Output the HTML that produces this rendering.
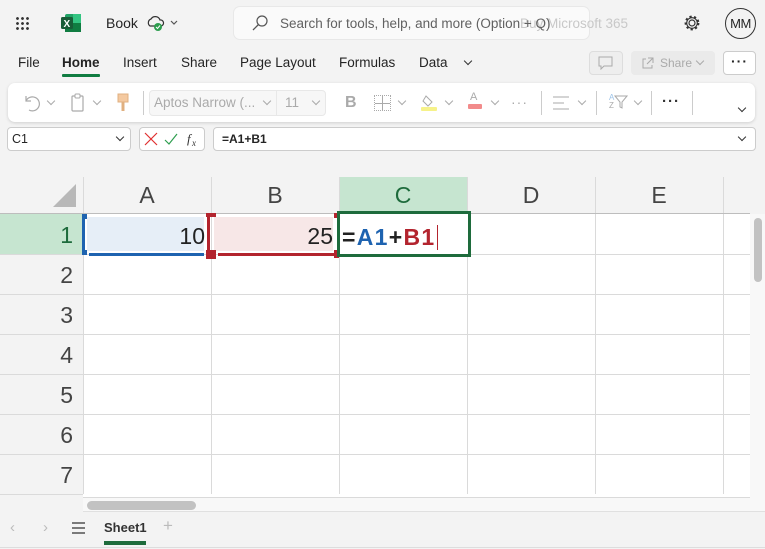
<!DOCTYPE html>
<html><head><style>
*{box-sizing:border-box;margin:0;padding:0}
body{width:765px;height:549px;overflow:hidden;background:#f3f3f3;font-family:"Liberation Sans",sans-serif;position:relative;color:#242424}
.a{position:absolute}
.t{font-size:13px;color:#242424}
.vl{position:absolute;top:177px;width:1px;background:#dadada}
.hl{position:absolute;left:0;height:1px;background:#dadada;width:750px}
.ch{position:absolute;top:177px;height:37px;font-size:23px;color:#444;text-align:center;line-height:37px;width:128px}
.rh{position:absolute;left:0;width:82px;height:40px;font-size:23px;color:#444;text-align:right;padding-right:9px;line-height:42px}
.chev{display:block;width:6px;height:6px;border-right:1.3px solid #555;border-bottom:1.3px solid #555;transform:rotate(45deg)}
</style></head><body>
<div class="a" style="left:15px;top:16px;width:14px;height:14px;background:radial-gradient(circle,#333 1.2px,transparent 1.6px) 0 0/5px 5px"></div>
<svg class="a" style="left:61px;top:14px" width="20" height="18"><rect x="4" y="0" width="16" height="18" rx="2" fill="#21a366"/><rect x="12" y="0" width="8" height="9" fill="#33c481"/><rect x="4" y="9" width="16" height="9" fill="#107c41"/><rect x="0" y="3" width="12" height="12" rx="1.5" fill="#185c37"/><text x="2.5" y="13" font-size="10" fill="#fff" font-family="Liberation Sans" font-weight="bold">X</text></svg>
<div class="a" style="left:106px;top:15px;font-size:14px">Book</div>
<svg class="a" style="left:146px;top:14px" width="34" height="18"><path d="M4 12a4 4 0 0 1 1-7a5 5 0 0 1 9 1a3 3 0 0 1 1 6z" fill="none" stroke="#333" stroke-width="1.2"/><circle cx="12" cy="13" r="4" fill="#2e9e4f"/><path d="M10 13l1.5 1.5 2.5-3" stroke="#fff" fill="none" stroke-width="1"/><path d="M25 7l3 3 3-3" stroke="#555" fill="none" stroke-width="1.2"/></svg>
<div class="a" style="left:234px;top:7px;width:355px;height:32px;background:#fafafa;border-radius:6px;box-shadow:0 0 0 1px #e8e8e8"></div>
<svg class="a" style="left:251px;top:14px" width="18" height="18"><circle cx="11" cy="7" r="5" fill="none" stroke="#555" stroke-width="1.2"/><path d="M7.5 10.5L2 16" stroke="#555" stroke-width="1.3"/></svg>
<div class="a" style="left:520px;top:16px;font-size:13.5px;color:#c8c8c8;white-space:nowrap">Buy Microsoft 365</div>
<div class="a" style="left:280px;top:16px;font-size:13.5px;color:#616161;white-space:nowrap">Search for tools, help, and more (Option + Q)</div>
<svg class="a" style="left:683px;top:14px" width="18" height="18"><circle cx="9" cy="9" r="3" fill="none" stroke="#333" stroke-width="1.2"/><circle cx="9" cy="9" r="6.3" fill="none" stroke="#333" stroke-width="2.2" stroke-dasharray="2.2 2.3"/><circle cx="9" cy="9" r="5.3" fill="none" stroke="#333" stroke-width="1.1"/></svg>
<div class="a" style="left:725px;top:8px;width:31px;height:31px;border:1.3px solid #333;border-radius:50%;font-size:13px;text-align:center;line-height:29px;letter-spacing:-0.5px">MM</div>
<div class="a t" style="left:18px;top:55px;font-size:13.5px">File</div>
<div class="a t" style="left:62px;top:55px;font-size:13.5px;font-weight:bold">Home</div>
<div class="a" style="left:62px;top:74px;width:38px;height:3px;background:#107c41;border-radius:1px"></div>
<div class="a t" style="left:123px;top:55px;font-size:13.5px">Insert</div>
<div class="a t" style="left:181px;top:55px;font-size:13.5px">Share</div>
<div class="a t" style="left:240px;top:55px;font-size:13.5px">Page Layout</div>
<div class="a t" style="left:339px;top:55px;font-size:13.5px">Formulas</div>
<div class="a t" style="left:419px;top:55px;font-size:13.5px">Data</div>
<div class="a" style="left:465px;top:58px"><span class="chev" style="border-color:#333"></span></div>
<div class="a" style="left:589px;top:51px;width:34px;height:24px;border:1px solid #ddd;border-radius:4px;background:#eee"></div>
<svg class="a" style="left:597px;top:56px" width="18" height="14"><path d="M2 1h13v9H7l-3 3v-3H2z" fill="none" stroke="#aaa"/></svg>
<div class="a" style="left:631px;top:51px;width:84px;height:24px;border-radius:4px;background:#eaeaea"></div>
<div class="a" style="left:660px;top:56px;font-size:12px;color:#aaa">Share</div>
<div class="a" style="left:697px;top:58px"><span class="chev" style="border-color:#aaa"></span></div>
<svg class="a" style="left:641px;top:56px" width="14" height="14"><path d="M7 2h5v5M12 2L6 8M5 3H2v9h9V9" fill="none" stroke="#aaa"/></svg>
<div class="a" style="left:723px;top:51px;width:33px;height:24px;border:1px solid #ccc;border-radius:4px;background:#fff;text-align:center;font-size:14px;line-height:18px;font-weight:bold;letter-spacing:1px">···</div>
<div class="a" style="left:8px;top:83px;width:747px;height:39px;background:#fff;border-radius:7px;box-shadow:0 1px 3px rgba(0,0,0,.15)"></div>
<svg class="a" style="left:22px;top:93px" width="20" height="20"><path d="M4 3v5h5M4 8a7 7 0 1 1 3 9" fill="none" stroke="#aaa" stroke-width="1.2"/></svg>
<div class="a" style="left:48px;top:98px"><span class="chev" style="border-color:#aaa"></span></div>
<svg class="a" style="left:70px;top:93px" width="16" height="20"><rect x="2" y="3" width="11" height="15" rx="1" fill="none" stroke="#aaa" stroke-width="1.2"/><rect x="5" y="1" width="5" height="4" rx="1" fill="#fff" stroke="#aaa"/></svg>
<div class="a" style="left:94px;top:98px"><span class="chev" style="border-color:#aaa"></span></div>
<svg class="a" style="left:117px;top:93px" width="12" height="20"><rect x="1" y="1" width="10" height="8" fill="#f4c9a0" stroke="#e0b080"/><path d="M6 9v9" stroke="#e0b080" stroke-width="3"/></svg>
<div class="a" style="left:143px;top:91px;width:1px;height:24px;background:#ccc"></div>
<div class="a" style="left:149px;top:90px;width:177px;height:26px;border:1px solid #e8e8e8;border-radius:4px;background:#f7f7f7"></div>
<div class="a" style="left:154px;top:95px;font-size:13.5px;color:#aaa">Aptos Narrow (...</div>
<div class="a" style="left:264px;top:98px"><span class="chev" style="border-color:#aaa"></span></div>
<div class="a" style="left:276px;top:90px;width:1px;height:26px;background:#e8e8e8"></div>
<div class="a" style="left:285px;top:95px;font-size:13.5px;color:#aaa">11</div>
<div class="a" style="left:313px;top:98px"><span class="chev" style="border-color:#aaa"></span></div>
<div class="a" style="left:345px;top:94px;font-size:16px;color:#aaa;font-weight:bold">B</div>
<div class="a" style="left:374px;top:95px;width:17px;height:16px;border:1px dotted #aaa;background:linear-gradient(#aaa,#aaa) 7px 0/1px 100% no-repeat,linear-gradient(#aaa,#aaa) 0 7px/100% 1px no-repeat"></div>
<div class="a" style="left:399px;top:98px"><span class="chev" style="border-color:#aaa"></span></div>
<svg class="a" style="left:420px;top:93px" width="18" height="18"><path d="M6 3l6 6-4 4-5-5z" fill="none" stroke="#aaa"/><rect x="1" y="14" width="16" height="4" rx="1" fill="#f6f28a"/></svg>
<div class="a" style="left:446px;top:98px"><span class="chev" style="border-color:#aaa"></span></div>
<div class="a" style="left:470px;top:91px;font-size:11px;color:#aaa">A</div>
<div class="a" style="left:468px;top:104px;width:14px;height:5px;background:#f28b8b;border-radius:1px"></div>
<div class="a" style="left:492px;top:98px"><span class="chev" style="border-color:#aaa"></span></div>
<div class="a" style="left:511px;top:94px;font-size:14px;color:#aaa;letter-spacing:1px">···</div>
<div class="a" style="left:541px;top:91px;width:1px;height:24px;background:#ccc"></div>
<svg class="a" style="left:553px;top:95px" width="18" height="16"><path d="M0 2h16M0 8h11M0 14h16" stroke="#aaa"/></svg>
<div class="a" style="left:579px;top:98px"><span class="chev" style="border-color:#aaa"></span></div>
<div class="a" style="left:596px;top:91px;width:1px;height:24px;background:#ccc"></div>
<div class="a" style="left:609px;top:94px;font-size:8px;line-height:8px;color:#9cc3e8">A<br><span style="color:#aaa">Z</span></div>
<svg class="a" style="left:614px;top:94px" width="14" height="16"><path d="M1 2h12l-5 6v6l-2-1V8z" fill="none" stroke="#aaa"/></svg>
<div class="a" style="left:635px;top:98px"><span class="chev" style="border-color:#aaa"></span></div>
<div class="a" style="left:651px;top:91px;width:1px;height:24px;background:#ccc"></div>
<div class="a" style="left:662px;top:93px;font-size:15px;font-weight:bold;color:#333;letter-spacing:1px">···</div>
<div class="a" style="left:692px;top:91px;width:1px;height:24px;background:#ccc"></div>
<div class="a" style="left:739px;top:105px"><span class="chev" style="border-color:#333"></span></div>
<div class="a" style="left:7px;top:127px;width:124px;height:24px;background:#fff;border:1px solid #ccc;border-radius:4px"></div>
<div class="a" style="left:12px;top:132px;font-size:12.5px">C1</div>
<div class="a" style="left:117px;top:134px"><span class="chev" style="border-color:#333"></span></div>
<div class="a" style="left:139px;top:127px;width:66px;height:24px;background:#fff;border:1px solid #ccc;border-radius:4px"></div>
<svg class="a" style="left:144px;top:132px" width="58" height="15"><path d="M1 1l12 12M13 1L1 13" stroke="#e03030" stroke-width="1.2"/><path d="M21 8l4 4 8-10" stroke="#2e9e4f" stroke-width="1.2" fill="none"/><text x="43" y="11" font-size="13" font-style="italic" font-family="Liberation Serif" fill="#333">f</text><text x="48" y="14" font-size="9" font-style="italic" font-family="Liberation Serif" fill="#333">x</text></svg>
<div class="a" style="left:213px;top:127px;width:543px;height:24px;background:#fff;border:1px solid #ccc;border-radius:4px"></div>
<div class="a" style="left:222px;top:132px;font-size:12px;font-weight:bold">=A1+B1</div>
<div class="a" style="left:739px;top:134px"><span class="chev" style="border-color:#333"></span></div>
<div class="a" style="left:83px;top:214px;width:667px;height:280px;background:#fff"></div>
<div class="a" style="left:339px;top:177px;width:128px;height:37px;background:#c6e5d0"></div>
<div class="a" style="left:0;top:214px;width:83px;height:40px;background:#c6e5d0"></div>
<svg class="a" style="left:52px;top:183px" width="26" height="26"><path d="M24 1V24H1z" fill="#b8b8b8"/></svg>
<div class="vl" style="left:83px;height:317px"></div>
<div class="vl" style="left:211px;height:317px"></div>
<div class="vl" style="left:339px;height:317px"></div>
<div class="vl" style="left:467px;height:317px"></div>
<div class="vl" style="left:595px;height:317px"></div>
<div class="vl" style="left:723px;height:317px"></div>
<div class="hl" style="top:213px;background:#bdbdbd"></div>
<div class="hl" style="top:254px"></div><div class="hl" style="top:294px"></div><div class="hl" style="top:334px"></div><div class="hl" style="top:374px"></div><div class="hl" style="top:414px"></div><div class="hl" style="top:454px"></div><div class="hl" style="top:494px"></div>
<div class="ch" style="left:83px">A</div><div class="ch" style="left:211px">B</div><div class="ch" style="left:339px;color:#1e6b3c">C</div><div class="ch" style="left:467px">D</div><div class="ch" style="left:595px">E</div>
<div class="rh" style="top:214px;color:#1e6b3c">1</div><div class="rh" style="top:254px">2</div><div class="rh" style="top:294px">3</div><div class="rh" style="top:334px">4</div><div class="rh" style="top:374px">5</div><div class="rh" style="top:414px">6</div><div class="rh" style="top:454px">7</div>
<div class="a" style="left:87px;top:217px;width:117px;height:34px;background:#e6eef7"></div>
<div class="a" style="left:82px;top:215px;width:3px;height:39px;background:#1e63b0"></div>
<div class="a" style="left:89px;top:253px;width:115px;height:3px;background:#1e63b0"></div>
<div class="a" style="left:82px;top:214px;width:5px;height:5px;background:#1e63b0"></div>
<div class="a" style="left:82px;top:250px;width:5px;height:5px;background:#1e63b0"></div>
<div class="a" style="left:90px;top:218px;width:115px;font-size:23px;text-align:right;line-height:36px;color:#222">10</div>
<div class="a" style="left:214px;top:217px;width:119px;height:34px;background:#f7e7e7"></div>
<div class="a" style="left:207px;top:215px;width:3px;height:38px;background:#b3242e"></div>
<div class="a" style="left:206px;top:213px;width:10px;height:4px;background:#b3242e"></div>
<div class="a" style="left:206px;top:250px;width:10px;height:9px;background:#b3242e"></div>
<div class="a" style="left:218px;top:253px;width:116px;height:3px;background:#b3242e"></div>
<div class="a" style="left:334px;top:213px;width:5px;height:5px;background:#b3242e"></div>
<div class="a" style="left:334px;top:250px;width:5px;height:8px;background:#b3242e"></div>
<div class="a" style="left:216px;top:218px;width:117px;font-size:23px;text-align:right;line-height:36px;color:#222">25</div>
<div class="a" style="left:337px;top:211px;width:134px;height:46px;border:3px solid #1e6b3c;background:#fff"></div>
<div class="a" style="left:342px;top:220px;font-size:23px;font-weight:bold;line-height:34px;color:#222;letter-spacing:1.3px">=<span style="color:#1e63b0">A1</span>+<span style="color:#b3242e">B1</span></div>
<div class="a" style="left:437px;top:225px;width:1px;height:25px;background:#b3242e"></div>
<div class="a" style="left:750px;top:214px;width:15px;height:297px;background:#f8f8f8"></div>
<div class="a" style="left:754px;top:218px;width:8px;height:64px;background:#c2c2c2;border-radius:4px"></div>
<div class="a" style="left:83px;top:494px;width:667px;height:4px;background:#fff;border-bottom:1px solid #dadada"></div>
<div class="a" style="left:83px;top:498px;width:682px;height:14px;background:#f8f8f8;border-bottom:1px solid #e0e0e0"></div>
<div class="a" style="left:87px;top:501px;width:109px;height:9px;background:#c2c2c2;border-radius:5px"></div>
<div class="a" style="left:10px;top:519px;font-size:15px;color:#bbb">‹</div>
<div class="a" style="left:43px;top:519px;font-size:15px;color:#bbb">›</div>
<svg class="a" style="left:72px;top:522px" width="14" height="12"><path d="M0 1h13M0 6h13M0 11h13" stroke="#333" stroke-width="1.2"/></svg>
<div class="a" style="left:104px;top:520px;font-size:13px;font-weight:bold;color:#333">Sheet1</div>
<div class="a" style="left:104px;top:541px;width:42px;height:4px;background:#1e6b3c"></div>
<div class="a" style="left:163px;top:516px;font-size:17px;color:#bbb">+</div>
<div class="a" style="left:0;top:547px;width:765px;height:1px;background:#ddd"></div>
</body></html>
